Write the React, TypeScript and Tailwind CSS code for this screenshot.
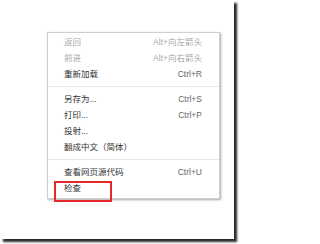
import React from "react";

type Item = { label: string; shortcut?: string; disabled?: boolean } | "sep";

const items: Item[] = [
  { label: "返回", shortcut: "Alt+向左箭头", disabled: true },
  { label: "前进", shortcut: "Alt+向右箭头", disabled: true },
  { label: "重新加载", shortcut: "Ctrl+R" },
  "sep",
  { label: "另存为...", shortcut: "Ctrl+S" },
  { label: "打印...", shortcut: "Ctrl+P" },
  { label: "投射..." },
  { label: "翻成中文（简体）" },
  "sep",
  { label: "查看网页源代码", shortcut: "Ctrl+U" },
  { label: "检查" },
];

export default function App() {
  return (
    <div
      className="w-[239px] h-[244px] bg-white overflow-hidden"
      style={{ fontFamily: '"Liberation Sans", "Noto Sans CJK SC", sans-serif' }}
    >
      <div className="w-[234px] h-[239px] bg-white shadow-[3px_3px_2px_#2a2a2a] pl-[47px] pt-[32px]">
        <div className="relative w-[173px] bg-white border border-[#cfcfcf] shadow-[1px_1px_2px_rgba(0,0,0,0.35)] pt-[1px] pb-[2px]">
          {items.map((it, i) =>
            it === "sep" ? (
              <div key={i} className="my-[4px] h-px bg-[#e6e6e6]" />
            ) : (
              <div
                key={i}
                className="h-[16px] flex items-center justify-between pl-[16px] pr-[17px] text-[8.5px] leading-none"
              >
                <span className={it.disabled ? "text-[#a8a8a8]" : "text-[#333333]"}>{it.label}</span>
                {it.shortcut && (
                  <span className={it.disabled ? "text-[#a8a8a8]" : "text-[#666666]"}>{it.shortcut}</span>
                )}
              </div>
            )
          )}
          <div className="absolute left-[6px] top-[148px] w-[58px] h-[21px] border-2 border-[#e5262b]" />
        </div>
      </div>
    </div>
  );
}
